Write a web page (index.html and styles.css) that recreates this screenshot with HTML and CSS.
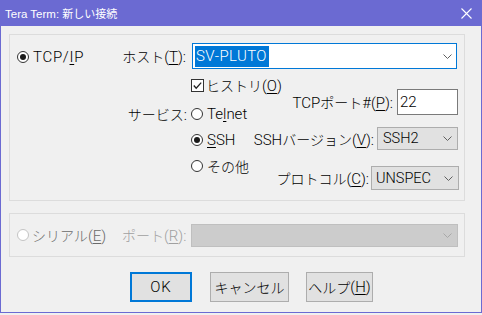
FILE: index.html
```html
<!DOCTYPE html>
<html lang="ja">
<head>
<meta charset="utf-8">
<title>Tera Term: 新しい接続</title>
<link rel="stylesheet" href="styles.css">
</head>
<body>
<div class="window">
  <div class="titlebar">
    <span class="title">Tera Term: <span class="kt">新しい接続</span></span>
    <svg class="close" width="11" height="11" viewBox="0 0 11 11"><path d="M0.5 0.5L10.5 10.5M10.5 0.5L0.5 10.5" stroke="#ffffff" stroke-width="1.1" fill="none"/></svg>
  </div>
  <div class="client">
    <div class="group g1">
      <div class="colA">
        <div class="opt tcp"><span class="radio on"></span><span class="txt">TCP/<u>I</u>P</span></div>
      </div>
      <div class="colB">
        <div class="lab host-lab"><span class="k">ホスト</span>(<u>T</u>):</div>
        <div class="lab svc-lab"><span class="k">サービス</span>:</div>
      </div>
      <div class="colC">
        <div class="combo host">
          <span class="sel">SV-PLUTO</span>
          <svg class="chev" width="9" height="5" viewBox="0 0 9 5"><polyline points="0.5,0.5 4.5,4.5 8.5,0.5" fill="none" stroke="#606060" stroke-width="1"/></svg>
        </div>
        <div class="split">
          <div class="left">
            <div class="opt chk-row"><span class="check"><svg width="11" height="11" viewBox="0 0 11 11"><polyline points="1.8,5.5 4.2,8.2 9.2,2.6" fill="none" stroke="#222" stroke-width="1.3"/></svg></span><span class="txt2"><span class="k">ヒストリ</span>(<u>O</u>)</span></div>
            <div class="opt telnet"><span class="radio"></span><span class="txt">Te<u>l</u>net</span></div>
            <div class="opt ssh"><span class="radio on"></span><span class="txt"><u>S</u>SH</span></div>
            <div class="opt other"><span class="radio"></span><span class="txt"><span class="k">その他</span></span></div>
          </div>
          <div class="right">
            <div class="row port"><span class="lab">TCP<span class="k">ポート</span>#(<u>P</u>):</span><div class="input">22</div></div>
            <div class="row ver"><span class="lab">SSH<span class="k">バージョン</span>(<u>V</u>):</span>
              <div class="combo drop ver-combo"><span class="val">SSH2</span><svg class="chev" width="9" height="5" viewBox="0 0 9 5"><polyline points="0.5,0.5 4.5,4.5 8.5,0.5" fill="none" stroke="#606060" stroke-width="1"/></svg></div>
            </div>
            <div class="row proto"><span class="lab"><span class="k">プロトコル</span>(<u>C</u>):</span>
              <div class="combo drop proto-combo"><span class="val">UNSPEC</span><svg class="chev" width="9" height="5" viewBox="0 0 9 5"><polyline points="0.5,0.5 4.5,4.5 8.5,0.5" fill="none" stroke="#606060" stroke-width="1"/></svg></div>
            </div>
          </div>
        </div>
      </div>
    </div>
    <div class="group g2">
      <div class="opt serial"><span class="radio off"></span><span class="txt dis1"><span class="k">シリアル</span>(<u>E</u>)</span></div>
      <div class="lab port-lab dis2"><span class="k">ポート</span>(<u>R</u>):</div>
      <div class="combo disabled"><span class="val"></span><svg class="chev" width="9" height="5" viewBox="0 0 9 5"><polyline points="0.5,0.5 4.5,4.5 8.5,0.5" fill="none" stroke="#a8a8a8" stroke-width="1"/></svg></div>
    </div>
    <div class="buttons">
      <div class="btn ok">OK</div>
      <div class="btn cancel"><span class="k">キャンセル</span></div>
      <div class="btn help"><span class="k">ヘルプ</span>(<u>H</u>)</div>
    </div>
  </div>
</div>
</body>
</html>
```

FILE: styles.css
```css
html, body {
  margin: 0;
  padding: 0;
}
body {
  width: 482px;
  height: 315px;
  background: #f0f0f0;
  font-family: Roboto, "Liberation Sans", "Noto Sans CJK JP", sans-serif;
  font-size: 15px;
  font-weight: 300;
  color: #000;
  overflow: hidden;
}
.k {
  font-family: "Noto Sans CJK JP", sans-serif;
  font-size: 14px;
  font-weight: 300;
}
u {
  text-decoration: underline;
  text-underline-offset: 2px;
  text-decoration-thickness: 1px;
}
.window {
  box-sizing: border-box;
  width: 482px;
  height: 313px;
  border: 1px solid #6b6ad2;
  border-top: none;
  background: #f0f0f0;
}
.titlebar {
  height: 26px;
  background: #6b6ad2;
  display: flex;
  align-items: center;
  justify-content: space-between;
  padding-left: 4px;
  color: #fff;
}
.title {
  font-size: 11.5px;
  font-weight: 400;
  font-family: "Liberation Sans", sans-serif;
}
.kt {
  font-family: "Noto Sans CJK JP", sans-serif;
  font-size: 11px;
}
.close {
  margin-right: 9px;
  margin-top: 1px;
}
.client {
  padding-left: 8px;
}
.group {
  box-sizing: border-box;
  width: 456px;
  border: 1px solid #dcdcdc;
}
.g1 {
  margin-top: 8px;
  height: 167px;
  display: flex;
}
.colA {
  width: 108px;
}
.colB {
  width: 69px;
  display: flex;
  flex-direction: column;
  align-items: flex-end;
}
.colC {
  width: 267px;
  margin-left: 4px;
}
.opt {
  display: flex;
  align-items: center;
  height: 20px;
  white-space: nowrap;
}
.lab {
  height: 20px;
  line-height: 20px;
  white-space: nowrap;
}
.tcp {
  margin-top: 12px;
  padding-left: 7px;
}
.tcp .txt {
  letter-spacing: 0.7px;
}
.host-lab {
  margin-top: 11px;
  margin-right: 1px;
}
.svc-lab {
  margin-top: 38px;
}
.radio {
  box-sizing: border-box;
  width: 12px;
  height: 12px;
  border: 1px solid #333;
  border-radius: 50%;
  background: #fff;
  display: flex;
  align-items: center;
  justify-content: center;
  flex: none;
}
.radio.on::after {
  content: "";
  width: 6px;
  height: 6px;
  border-radius: 50%;
  background: #1a1a1a;
}
.radio.off {
  border-color: #c4c4c4;
}
.txt {
  margin-left: 4px;
}
.combo {
  box-sizing: border-box;
  display: flex;
  align-items: center;
  justify-content: space-between;
}
.combo.host {
  margin-top: 8px;
  margin-left: 1px;
  width: 265px;
  height: 26px;
  border: 1px solid #0078d7;
  background: #fff;
  padding: 0 4px 0 2px;
}
.sel {
  display: inline-block;
  height: 21px;
  line-height: 21px;
  padding: 0 2px 0 1px;
  background: #0078d7;
  color: #fff;
  letter-spacing: 0.4px;
}
.split {
  display: flex;
}
.left {
  width: 58px;
  flex: none;
}
.chk-row {
  margin-top: 6px;
}
.check {
  box-sizing: border-box;
  width: 13px;
  height: 13px;
  border: 1px solid #333;
  background: #fff;
  display: flex;
  align-items: center;
  justify-content: center;
  flex: none;
}
.txt2 {
  margin-left: 2px;
}
.telnet {
  margin-top: 9px;
}
.ssh, .other {
  margin-top: 6px;
}
.right {
  flex: 1;
  display: flex;
  flex-direction: column;
  align-items: flex-end;
}
.row {
  display: flex;
  align-items: center;
}
.port {
  margin-top: 20px;
}
.port .lab {
  margin-right: 4px;
}
.input {
  box-sizing: border-box;
  width: 61px;
  height: 26px;
  border: 1px solid #7a7a7a;
  background: #fff;
  padding-left: 2px;
  line-height: 24px;
}
.ver {
  margin-top: 12px;
}
.ver .lab {
  margin-right: 3px;
}
.drop {
  border: 1px solid #adadad;
  background: #e1e1e1;
  font-size: 14.5px;
}
.ver-combo {
  width: 81px;
  height: 23px;
  padding: 0 5px 0 5px;
}
.proto {
  margin-top: 16px;
  margin-right: -1px;
}
.proto .lab {
  margin-right: 2px;
}
.proto-combo {
  width: 88px;
  height: 24px;
  padding: 0 5px 0 4px;
}
.g2 {
  margin-top: 12px;
  height: 44px;
  display: flex;
  align-items: center;
  padding-left: 7px;
}
.serial {
  width: 105px;
  flex: none;
}
.serial .txt {
  margin-left: 3px;
}
.dis1 {
  color: #6a6a6a;
}
.dis2 {
  color: #a0a0a0;
}
.port-lab {
  width: 62px;
  flex: none;
}
.combo.disabled {
  margin-left: 7px;
  width: 267px;
  height: 23px;
  border: 1px solid #bfbfbf;
  background: #cccccc;
  padding: 0 5px;
}
.buttons {
  display: flex;
  margin-top: 15px;
  padding-left: 121px;
}
.btn {
  box-sizing: border-box;
  height: 30px;
  border: 1px solid #adadad;
  background: #e1e1e1;
  display: flex;
  align-items: center;
  justify-content: center;
  white-space: nowrap;
}
.ok {
  width: 62px;
  border: 2px solid #0078d7;
  letter-spacing: 1px;
}
.cancel {
  width: 79px;
  margin-left: 18px;
}
.help {
  width: 67px;
  margin-left: 17px;
}
```
